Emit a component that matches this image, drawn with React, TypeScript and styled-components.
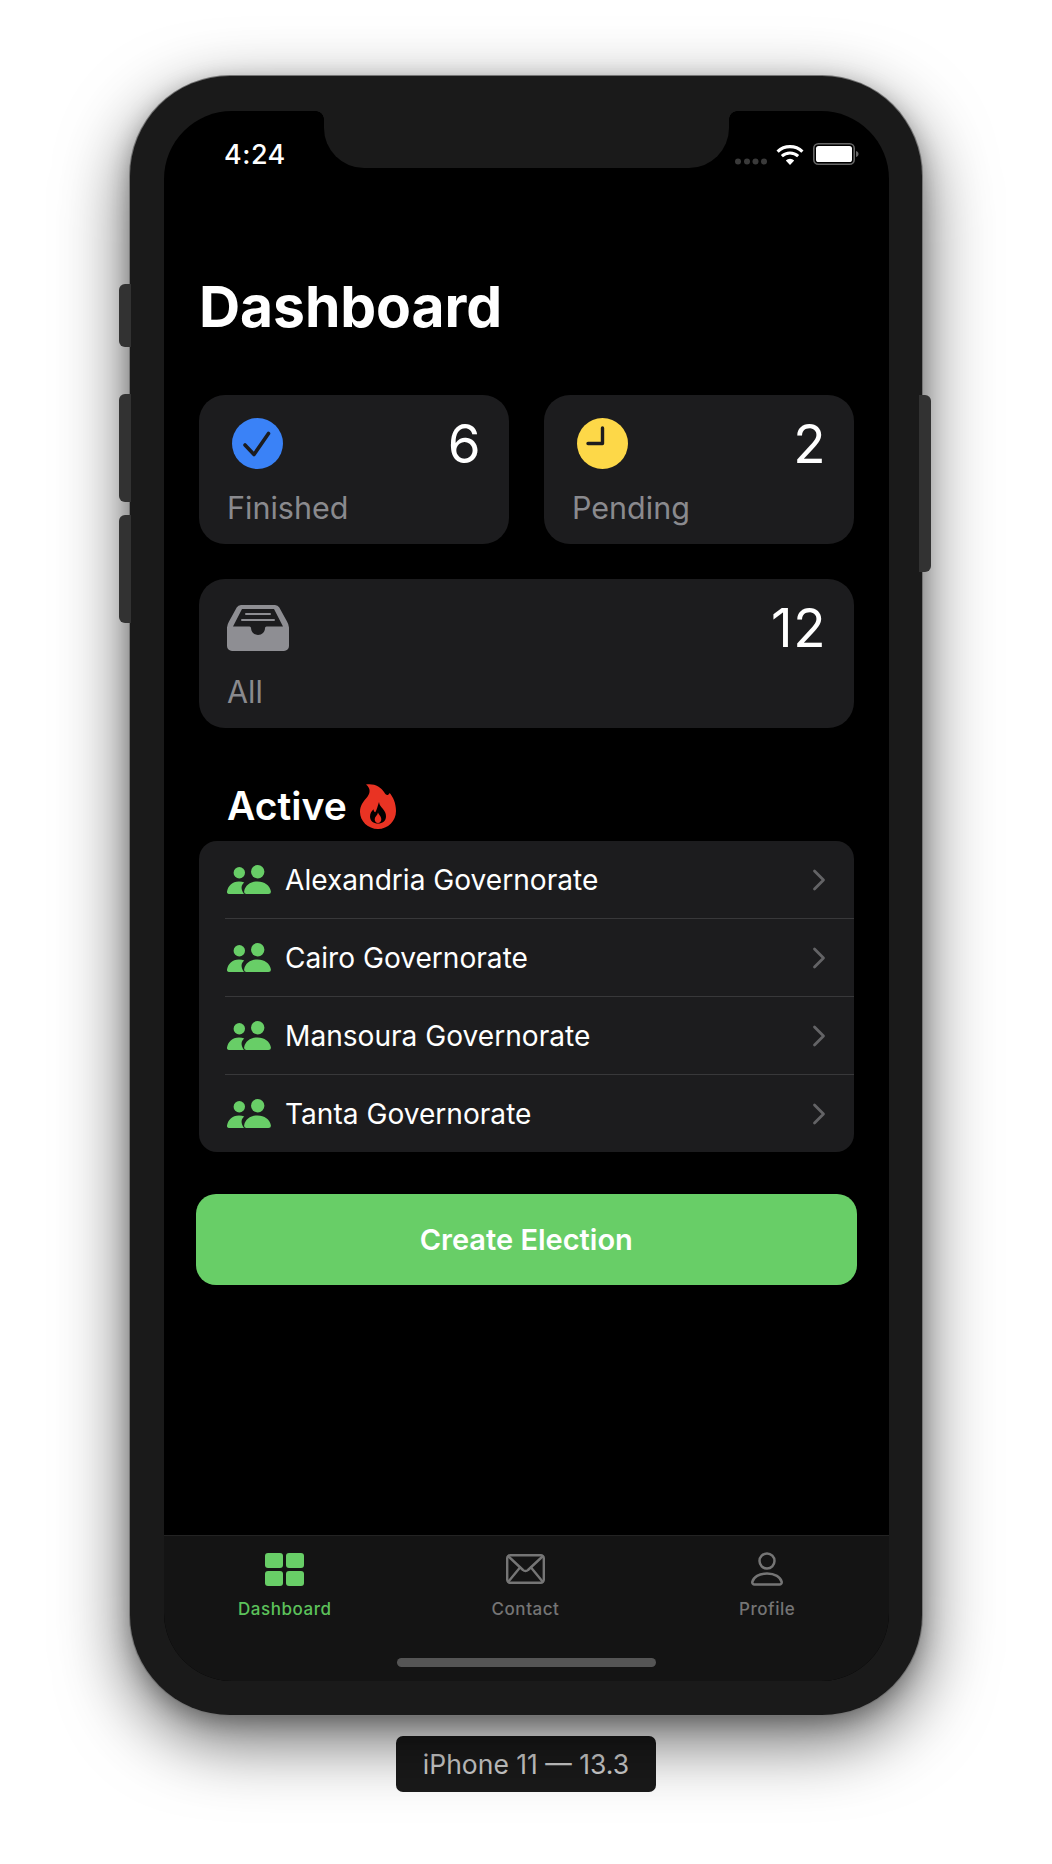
import React from 'react';
import styled, { createGlobalStyle } from 'styled-components';

const Global = createGlobalStyle`
  html, body { margin: 0; padding: 0; background: #fff; }
  body { font-family: Inter, "Liberation Sans", sans-serif; overflow: hidden; }
  * { box-sizing: border-box; }
`;
const Page = styled.div`
  width: 1052px; height: 1864px; padding-top: 76px; background: #fff;
  display: flex; flex-direction: column; align-items: center; overflow: hidden;
`;
const Phone = styled.div`
  position: relative; width: 792px; height: 1639px; padding: 35px 33px 34px 34px;
  border-radius: 100px; background: #1a1a1a;
  box-shadow: 0 0 0 1px #757575, 0 24px 70px rgba(0,0,0,.62), 0 6px 22px rgba(0,0,0,.25);
`;
const SideButton = styled.div<{ $top: number; $h: number; $right?: boolean }>`
  position: absolute; top: ${p => p.$top}px; height: ${p => p.$h}px; width: 12px;
  ${p => (p.$right ? 'right: -9px; border-radius: 0 6px 6px 0;' : 'left: -11px; border-radius: 6px 0 0 6px;')}
  background: #323232;
`;
const Screen = styled.div`
  position: relative; width: 725px; height: 1570px; border-radius: 68px; background: #000;
  overflow: hidden; display: flex; flex-direction: column; color: #fff;
`;
const Notch = styled.div`
  position: absolute; top: 0; left: 160px; width: 405px; height: 57px; background: #1a1a1a;
  border-radius: 0 0 40px 40px;
  &::before, &::after { content: ''; position: absolute; top: 0; width: 8px; height: 8px; }
  &::before { left: -8px; background: radial-gradient(circle at 0 100%, transparent 7.5px, #1a1a1a 8px); }
  &::after { right: -8px; background: radial-gradient(circle at 100% 100%, transparent 7.5px, #1a1a1a 8px); }
`;
const StatusBar = styled.div`
  display: flex; justify-content: space-between; align-items: flex-start;
  padding: 29px 30px 0 60px; height: 160px;
`;
const Time = styled.div`
  font-size: 27px; line-height: 30px; font-weight: 500; letter-spacing: .5px;
`;
const StatusIcons = styled.div`
  display: flex; align-items: flex-end; gap: 9px; margin-top: 3px;
`;
const Content = styled.div`
  flex: 1; padding: 0 35px; display: flex; flex-direction: column;
`;
const Title = styled.h1`
  margin: 2px 0 0; font-size: 57px; line-height: 68px; font-weight: 700; letter-spacing: -.1px;
`;
const Stats = styled.div`
  display: grid; grid-template-columns: 1fr 1fr; gap: 35.5px 35px; margin-top: 54px;
`;
const Card = styled.div<{ $wide?: boolean }>`
  ${p => (p.$wide ? 'grid-column: 1 / 3;' : '')}
  height: 148.5px; border-radius: 26px; background: #1c1c1e; padding: 23px 28px 0 28px;
`;
const CardTop = styled.div`
  display: flex; justify-content: space-between; align-items: flex-start; height: 52px;
`;
const CardNumber = styled.div`
  font-size: 53px; line-height: 52px; font-weight: 400; letter-spacing: .5px;
`;
const CardLabel = styled.div`
  margin-top: 19px; font-size: 30.5px; line-height: 38px; color: #8a8a8e;
`;
const SectionTitle = styled.h2`
  margin: 51.5px 0 0; padding: 0 0 6px 28px; height: 60px; display: flex; align-items: center; gap: 13px;
  font-size: 39px; line-height: 48px; font-weight: 600;
`;
const List = styled.div`
  background: #1c1c1e; border-radius: 18px; overflow: hidden; margin-top: 2px;
`;
const Row = styled.div<{ $first?: boolean }>`
  height: ${p => (p.$first ? 77 : 78)}px; margin-left: 26px; padding: 0 28px 0 2px;
  display: flex; align-items: center; gap: 14px;
  ${p => (p.$first ? '' : 'border-top: 1px solid #38383a;')}
  font-size: 28.1px; color: #fff;
`;
const RowText = styled.span`flex: 1;`;
const CreateButton = styled.div`
  margin: 42px -3px 0 -3.5px; height: 91px; border-radius: 20px; background: #68ce67;
  display: flex; align-items: center; justify-content: center;
  font-size: 29px; font-weight: 600; color: #fff;
`;
const TabBar = styled.div`
  position: relative; height: 146px; background: #141414; border-top: 1px solid #232323;
  display: grid; grid-template-columns: repeat(3, 1fr); padding-top: 16px;
`;
const Tab = styled.div<{ $active?: boolean }>`
  display: flex; flex-direction: column; align-items: center;
  color: ${p => (p.$active ? '#5cc25b' : '#757575')};
  ${p => (p.$active ? '' : 'margin-left: -2px;')}
`;
const TabIconBox = styled.div`
  height: 34px; display: flex; align-items: center; justify-content: center;
`;
const TabLabel = styled.div`
  margin-top: 12px; font-size: 17px; line-height: 22px; font-weight: 500; letter-spacing: .55px;
`;
const HomeBar = styled.div`
  position: absolute; left: 233px; bottom: 14px; width: 259px; height: 9px; border-radius: 5px;
  background: #555;
`;
const DeviceLabel = styled.div`
  margin-top: 21px; width: 260px; height: 56px; border-radius: 7px; background: #1a1a1a;
  color: #d2d2d2; font-size: 26.5px; display: flex; align-items: center; justify-content: center;
  box-shadow: 0 -1px 0 1px rgba(255,255,255,.16);
`;

const CheckIcon = () => (
  <svg width="51" height="51" viewBox="0 0 51 51" style={{ marginLeft: 5 }}>
    <circle cx="25.5" cy="25.5" r="25.5" fill="#3a82f7" />
    <path d="M13 27l9 9.5L36.5 15.5" fill="none" stroke="#1c1c1e" strokeWidth="3.6" strokeLinecap="round" strokeLinejoin="round" />
  </svg>
);
const ClockIcon = () => (
  <svg width="51" height="51" viewBox="0 0 51 51" style={{ marginLeft: 5 }}>
    <circle cx="25.5" cy="25.5" r="25.5" fill="#fdd848" />
    <path d="M25.5 10v15.5H11" fill="none" stroke="#1c1c1e" strokeWidth="3.4" strokeLinecap="round" strokeLinejoin="round" />
  </svg>
);
const InboxIcon = () => (
  <svg width="62" height="46" viewBox="0 0 62 46" style={{ marginTop: 3 }}>
    <path d="M14 0h34a5 5 0 0 1 4.300 2.500L60 16.500a14 14 0 0 1 2 6V41a5 5 0 0 1-5 5H5a5 5 0 0 1-5-5V22.500a14 14 0 0 1 2-6L9.700 2.500A5 5 0 0 1 14 0z" fill="#8e8e93" />
    <path d="M15 4h32l9 17.500H39.500a1.500 1.500 0 0 0-1.500 1.500c0 4-3 7-7 7s-7-3-7-7a1.500 1.500 0 0 0-1.500-1.500H6z" fill="#1c1c1e" />
    <path d="M19 9h24M15 15h32" stroke="#8e8e93" strokeWidth="2" strokeLinecap="round" />
  </svg>
);
const Flame = () => (
  <svg width="36" height="45" viewBox="0 0 36 45">
    <path d="M6 .5C14-1 21 3 24 8c1.500 2.500 3 4 4.500 2.500 .5-.5 1-1 1.200-1.500C33 13 36 19 36 27c0 10-8 18-18 18S0 37 0 28c0-6 3-10 6-13.500C10 10 11.500 5 6 .5z" fill="#e93323" />
    <path d="M19 18c.4 3.500 2 4.500 3.800 6.800 2.200 2.700 3.200 4.700 3.200 7.700 0 4.500-3.500 7-8 7s-8-2.500-8-7c0-3.300 1.700-5.500 3.500-7.300 .2 1.800 .8 2.800 1.800 3C17 25.800 17.700 21.500 19 18z" fill="#000" />
    <path d="M18 28.500c.5 2 3.300 3.500 3.300 6.800 0 2.400-1.400 3.700-3.300 3.700s-3.300-1.300-3.300-3.700c0-2.500 2.800-4 3.300-6.800z" fill="#e93323" />
  </svg>
);
const PeopleIcon = () => (
  <svg width="44" height="29" viewBox="0 0 44 29">
    <g fill="#68ce67">
      <circle cx="12.300" cy="7.800" r="5.700" />
      <circle cx="30.700" cy="6.700" r="6.700" />
      <path d="M17 29h-15a2 2 0 0 1-2-2.500C1 21 5 16.500 12 16.500c2 0 3.800.4 5.300 1.100C14.500 20 13 23 17 29z" />
      <path d="M19.500 29a2.500 2.500 0 0 1-2.300-3C18.200 20.500 23.500 16.500 30.500 16.500S42.800 20.500 43.800 26a2.500 2.500 0 0 1-2.300 3z" />
    </g>
  </svg>
);
const Chevron = () => (
  <svg width="14" height="22" viewBox="0 0 14 22">
    <path d="M2.500 2l9 9-9 9" fill="none" stroke="#636366" strokeWidth="2.800" strokeLinecap="round" strokeLinejoin="round" />
  </svg>
);
const GridIcon = () => (
  <svg width="39" height="33" viewBox="0 0 39 33">
    <g fill="#68ce67">
      <rect x="0" y="0" width="18" height="15" rx="3" />
      <rect x="21" y="0" width="18" height="15" rx="3" />
      <rect x="0" y="18" width="18" height="15" rx="3" />
      <rect x="21" y="18" width="18" height="15" rx="3" />
    </g>
  </svg>
);
const MailIcon = () => (
  <svg width="39" height="30" viewBox="0 0 39 30">
    <g fill="none" stroke="#757575" strokeWidth="2.400" strokeLinecap="round" strokeLinejoin="round">
      <rect x="1.200" y="1.200" width="36.600" height="27.600" rx="3" />
      <path d="M2.500 2.500L17 16a3.500 3.500 0 0 0 5 0L36.500 2.500" />
      <path d="M2.500 27.500l11.500-14M36.500 27.500l-11.500-14" />
    </g>
  </svg>
);
const UserIcon = () => (
  <svg width="32" height="34" viewBox="0 0 32 34">
    <g fill="none" stroke="#757575" strokeWidth="2.500">
      <circle cx="16" cy="9" r="7.500" />
      <path d="M3.500 32.500a2.200 2.200 0 0 1-2.200-2.600C2.500 25 8 21.500 16 21.500s13.500 3.500 14.700 8.400a2.200 2.200 0 0 1-2.200 2.600z" />
    </g>
  </svg>
);
const Dots = () => (
  <svg width="32" height="7" viewBox="0 0 32 7">
    <g fill="#3a3a3a">
      <circle cx="3" cy="3.500" r="3" /><circle cx="12" cy="3.500" r="3" /><circle cx="20.500" cy="3.500" r="3" /><circle cx="29" cy="3.500" r="3" />
    </g>
  </svg>
);
const Wifi = () => (
  <svg width="28" height="22" viewBox="0 0 28 22">
    <g fill="#fff">
      <path d="M14 22l-4.200-4.600a6 6 0 0 1 8.400 0z" />
      <path d="M6.900 14.300l-2.100-2.300a13.500 13.500 0 0 1 18.400 0l-2.100 2.300a10.300 10.300 0 0 0-14.200 0z" />
      <path d="M2.700 9.800L.5 7.400a19.800 19.800 0 0 1 27 0l-2.200 2.400a16.600 16.600 0 0 0-22.600 0z" />
    </g>
  </svg>
);
const Battery = () => (
  <svg width="46" height="22" viewBox="0 0 46 22">
    <rect x=".8" y=".8" width="40.400" height="20.400" rx="4.500" fill="none" stroke="#666" strokeWidth="1.600" />
    <rect x="3" y="3" width="36" height="16" rx="2.600" fill="#fff" />
    <path d="M43 8c1.800.5 2.500 1.600 2.500 3S44.800 13.500 43 14z" fill="#666" />
  </svg>
);

const cities = ['Alexandria Governorate', 'Cairo Governorate', 'Mansoura Governorate', 'Tanta Governorate'];

export default function App() {
  return (
    <Page>
      <Global />
      <Phone>
        <SideButton $top={208} $h={63} />
        <SideButton $top={318} $h={108} />
        <SideButton $top={439} $h={108} />
        <SideButton $right $top={319} $h={177} />
        <Screen>
          <Notch />
          <StatusBar>
            <Time>4:24</Time>
            <StatusIcons>
              <Dots />
              <Wifi />
              <Battery />
            </StatusIcons>
          </StatusBar>
          <Content>
            <Title>Dashboard</Title>
            <Stats>
              <Card>
                <CardTop><CheckIcon /><CardNumber>6</CardNumber></CardTop>
                <CardLabel>Finished</CardLabel>
              </Card>
              <Card>
                <CardTop><ClockIcon /><CardNumber>2</CardNumber></CardTop>
                <CardLabel>Pending</CardLabel>
              </Card>
              <Card $wide>
                <CardTop><InboxIcon /><CardNumber>12</CardNumber></CardTop>
                <CardLabel>All</CardLabel>
              </Card>
            </Stats>
            <SectionTitle>Active <Flame /></SectionTitle>
            <List>
              {cities.map((c, i) => (
                <Row key={c} $first={i === 0}>
                  <PeopleIcon />
                  <RowText>{c}</RowText>
                  <Chevron />
                </Row>
              ))}
            </List>
            <CreateButton>Create Election</CreateButton>
          </Content>
          <TabBar>
            <Tab $active><TabIconBox><GridIcon /></TabIconBox><TabLabel>Dashboard</TabLabel></Tab>
            <Tab><TabIconBox><MailIcon /></TabIconBox><TabLabel>Contact</TabLabel></Tab>
            <Tab><TabIconBox><UserIcon /></TabIconBox><TabLabel>Profile</TabLabel></Tab>
            <HomeBar />
          </TabBar>
        </Screen>
      </Phone>
      <DeviceLabel>iPhone 11 — 13.3</DeviceLabel>
    </Page>
  );
}
